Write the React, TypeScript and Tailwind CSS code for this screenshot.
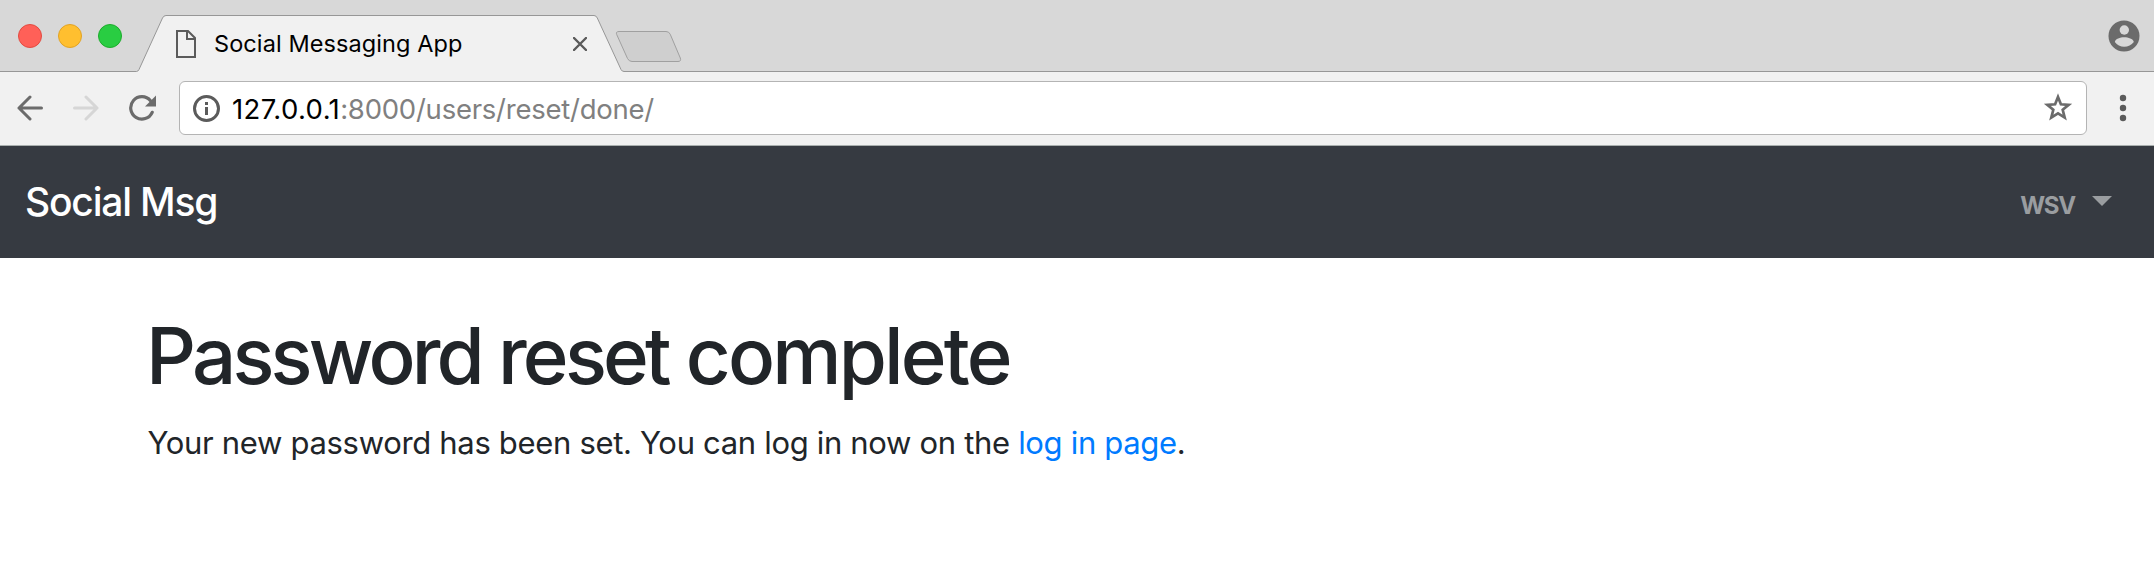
function TabStrip() {
  return (
    <header className="relative h-[72px] bg-[#d8d8d8]">
      <svg className="absolute inset-0" width="2154" height="72" viewBox="0 0 2154 72" fill="none">
        <path
          d="M-2 71.5H136.500Q138 71.500 139 69.500L162.500 18Q163.700 15.500 166 15.500H594Q596.200 15.500 597.300 18L621 69.500Q622 71.500 624 71.500H2156V74H-2Z"
          fill="#f1f1f1"
          stroke="#979797"
        />
        <path
          d="M619 31.500H666Q669 31.500 670.200 34.200L680.300 58Q681.500 61.500 678 61.500H632Q629 61.500 627.500 58.500L616.700 34.500Q615.500 31.500 619 31.500Z"
          fill="#cfcfcf"
          stroke="#a0a0a0"
        />
      </svg>
      <div className="relative flex h-[72px] items-center">
        <div className="ml-[18px] flex gap-4">
          <span className="size-6 rounded-full border border-[#e24b41] bg-[#ff6058]" />
          <span className="size-6 rounded-full border border-[#e1a325] bg-[#ffbf2f]" />
          <span className="size-6 rounded-full border border-[#1dac2c] bg-[#29cd42]" />
        </div>
        <div className="ml-[54px] flex w-[411px] items-center pt-4">
          <svg width="20" height="28" viewBox="0 0 20 28" fill="none" stroke="#5b5b5b" strokeWidth="2">
            <path d="M1 1H12L19 8V27H1ZM11 1V9H19" />
          </svg>
          <span className="ml-[18px] text-[23.5px] leading-7 tracking-[0.09px] text-black">Social Messaging App</span>
          <svg className="ml-auto" width="14" height="14" viewBox="0 0 14 14" stroke="#5a5a5a" strokeWidth="2.4">
            <path d="M1 1L13 13M13 1L1 13" strokeLinecap="round" />
          </svg>
        </div>
        <svg className="mr-[14px] ml-auto" width="32" height="32" viewBox="0 0 32 32">
          <circle cx="16" cy="16" r="15.500" fill="#6b6b6b" />
          <circle cx="16.300" cy="10" r="4.700" fill="#d8d8d8" />
          <path d="M6.800 22C7.500 18.800 12 17.300 16.200 17.300S25 18.800 25.800 22C23.500 25.200 20 26.700 16.200 26.700S9 25.200 6.800 22Z" fill="#d8d8d8" />
        </svg>
      </div>
    </header>
  );
}

function Toolbar() {
  return (
    <div className="flex h-[74px] items-center border-b border-[#a9afae] bg-[#f1f1f1] pb-[1px] pl-[17px]">
      <svg className="mb-[1px]" width="26" height="26" viewBox="0 0 26 26" fill="none" stroke="#6b6b6b" strokeWidth="3" strokeLinecap="round" strokeLinejoin="round">
        <path d="M24.500 13H2M13 2L2 13L13 24" />
      </svg>
      <svg className="mb-[1px] ml-[30px]" width="26" height="26" viewBox="0 0 26 26" fill="none" stroke="#d6d6d6" strokeWidth="3" strokeLinecap="round" strokeLinejoin="round">
        <path d="M1.500 13H24M13 2L24 13L13 24" />
      </svg>
      <svg className="ml-[30px]" width="28" height="28" viewBox="0 0 28 28" fill="none">
        <path d="M23.200 18.300A11.200 11.200 0 1 1 21.500 6.700" stroke="#6b6b6b" strokeWidth="3.200" strokeLinecap="round" />
        <path d="M27 1.500V12.500H16Z" fill="#6b6b6b" />
      </svg>
      <div className="ml-[22px] flex h-[54px] w-[1908px] items-center rounded-[6px] border border-[#b4b4b4] bg-white pr-3 pl-[13px]">
        <svg width="27" height="27" viewBox="0 0 27 27" fill="none">
          <circle cx="13.500" cy="13.500" r="12" stroke="#5b5b5b" strokeWidth="3" />
          <path d="M12 7H15V10H12ZM12 12H15V20H12Z" fill="#5b5b5b" />
        </svg>
        <p className="ml-[12px] pt-[1px] text-[27.5px] leading-9 whitespace-nowrap">
          <span className="tracking-[0.4px] text-black">127.0.0.1</span>
          <span className="tracking-[-0.24px] text-[#808080]">:8000/users/reset/done/</span>
        </p>
        <svg className="ml-auto" width="32" height="32" viewBox="0 0 32 32" fill="none" stroke="#6b6b6b" strokeWidth="2.700">
          <path d="M16 5L18.900 12.300L26.700 12.800L20.700 17.800L22.700 25.600L16 21.400L9.300 25.600L11.300 17.800L5.300 12.800L13.100 12.300Z" />
        </svg>
      </div>
      <svg className="ml-[32px]" width="8" height="28" viewBox="0 0 8 28" fill="#5b5b5b">
        <circle cx="4" cy="4" r="3.200" />
        <circle cx="4" cy="14" r="3.200" />
        <circle cx="4" cy="24" r="3.200" />
      </svg>
    </div>
  );
}

function Navbar() {
  return (
    <nav className="flex h-28 items-center justify-between bg-[#363a41] pr-[42px] pl-[25px]">
      <a className="text-[39px] leading-[60px] font-[450] tracking-[-1.2px] text-white">Social Msg</a>
      <button className="flex items-center text-[#9a9da0]">
        <span className="pt-[7px] text-[24px] leading-9 font-bold tracking-[-1.2px]">WSV</span>
        <svg className="mb-[2px] ml-[17px]" width="20" height="10" viewBox="0 0 20 10" fill="currentColor">
          <path d="M0 0H20L10 10Z" />
        </svg>
      </button>
    </nav>
  );
}

export default function App() {
  return (
    <div className="h-[566px] w-[2154px] overflow-hidden bg-white font-[Inter,sans-serif]">
      <TabStrip />
      <Toolbar />
      <Navbar />
      <main className="pt-[50px] pl-[147.5px] text-[#212529]">
        <h1 className="-ml-[1.5px] text-[78px] leading-[96px] font-medium whitespace-nowrap">
          <span className="tracking-[-3.8px]">Password reset</span>
          <span className="tracking-[-2.85px]"> complete</span>
        </h1>
        <p className="mt-[15px] text-[31px] leading-[48px] tracking-[-0.32px]">
          Your new password has been set. You can log in now on the <a className="text-[#007bff]">log in page</a>.
        </p>
      </main>
    </div>
  );
}
